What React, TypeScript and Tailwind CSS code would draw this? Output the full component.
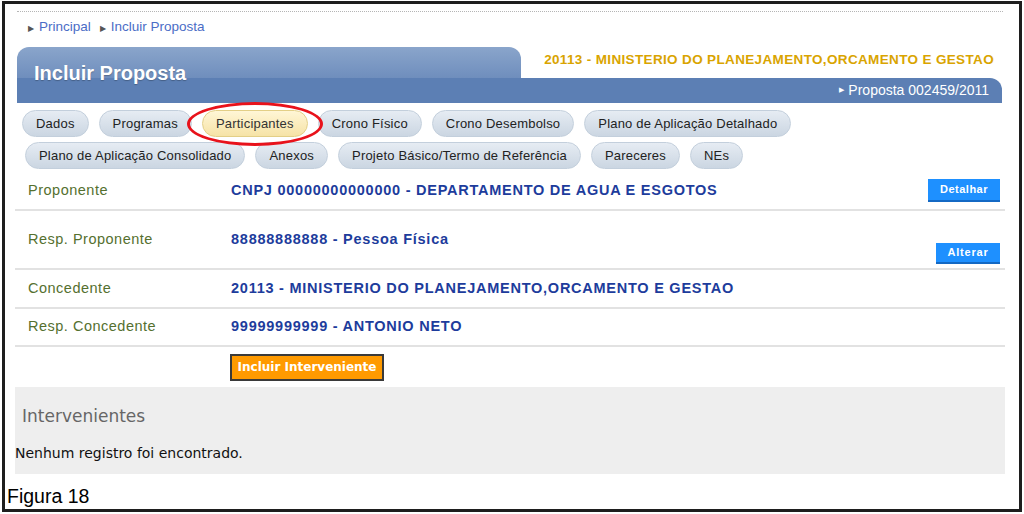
import React from "react";

const tabsRow1 = [
  "Dados",
  "Programas",
  "Participantes",
  "Crono Físico",
  "Crono Desembolso",
  "Plano de Aplicação Detalhado",
];

const tabsRow2 = [
  "Plano de Aplicação Consolidado",
  "Anexos",
  "Projeto Básico/Termo de Referência",
  "Pareceres",
  "NEs",
];

const Tab = ({ label }: { label: string }) => {
  const active = label === "Participantes";
  return (
    <div
      className={
        active
          ? "relative flex h-[27px] items-center rounded-full border border-[#e3cf86] bg-gradient-to-b from-[#fff6d6] to-[#f6e3a6] px-[13px] text-[13px] tracking-[0.2px] text-[#333]"
          : "flex h-[27px] items-center rounded-full border border-[#c3cfdc] bg-gradient-to-b from-[#e6ecf3] to-[#cbd6e2] px-[13px] text-[13px] tracking-[0.2px] text-[#222]"
      }
    >
      {label}
      {active && (
        <div className="pointer-events-none absolute left-[-16px] top-[-9px] h-[44px] w-[136px] rounded-[50%] border-[3px] border-[#e8121b]" />
      )}
    </div>
  );
};

const Row = ({
  label,
  value,
  height,
  children,
}: {
  label: string;
  value: string;
  height: string;
  children?: React.ReactNode;
}) => (
  <div className={`relative flex ${height} items-center border-b-2 border-[#e2e2e2]`}>
    <div className="w-[216px] pl-[13px] text-[14.5px] tracking-[0.5px] text-[#55702f]">{label}</div>
    <div className="text-[14.5px] font-bold tracking-[0.75px] text-[#1d3c9c]">{value}</div>
    {children}
  </div>
);

export default function App() {
  return (
    <div className="h-[514px] w-[1024px] bg-white px-[2px] pb-[2px] pt-[1px] font-['Liberation_Sans',Arial,sans-serif]">
      <div className="flex h-full flex-col border-[3px] border-[#1e1e1e] pl-[10px] pr-[14px]">
        {/* top dotted line + breadcrumb */}
        <div className="mx-[2px] mt-[7px] border-t border-dotted border-[#b5b5b5]" />
        <div className="ml-[13px] mt-[8px] flex h-[14px] items-center gap-[9px] text-[13.5px] text-[#4b6dc6]">
          <span>
            <span className="mr-[5px] text-[8px] text-[#555]">▶</span>Principal
          </span>
          <span>
            <span className="mr-[5px] text-[8px] text-[#555]">▶</span>Incluir Proposta
          </span>
        </div>

        {/* header */}
        <div className="ml-[2px] mr-[3px] mt-[13px]">
          <div className="flex h-[31px]">
            <div className="flex w-[504px] items-end rounded-t-[12px] bg-gradient-to-b from-[#8aa5cb] to-[#6f8ebd] pl-[17px]">
              <span className="translate-y-[10px] text-[20px] font-bold text-white [text-shadow:0_1px_1px_rgba(0,0,0,0.25)]">
                Incluir Proposta
              </span>
            </div>
            <div className="flex flex-1 items-center justify-end pb-[4px] pr-[8px] text-[13.5px] font-bold tracking-[0.35px] text-[#d9a400]">
              20113 - MINISTERIO DO PLANEJAMENTO,ORCAMENTO E GESTAO
            </div>
          </div>
          <div className="flex h-[25px] items-center justify-end rounded-tr-[12px] bg-[#5c7fb4] pr-[13px] text-[14px] text-white">
            <span className="mr-[4px] text-[7px]">▶</span>Proposta 002459/2011
          </div>
        </div>

        {/* tabs */}
        <div className="mt-[7px] flex flex-col gap-[5px] pl-[7px]">
          <div className="flex gap-[10px]">
            {tabsRow1.map((t) => (
              <Tab key={t} label={t} />
            ))}
          </div>
          <div className="flex gap-[10px] pl-[3px]">
            {tabsRow2.map((t) => (
              <Tab key={t} label={t} />
            ))}
          </div>
        </div>

        {/* data rows */}
        <div className="mt-[3px]">
          <Row label="Proponente" value="CNPJ 00000000000000 - DEPARTAMENTO DE AGUA E ESGOTOS" height="h-[39px]">
            <button className="ml-auto mr-[5px] h-[23px] w-[72px] border-b-2 border-[#1469c4] bg-[#1e90ff] text-[11px] font-bold tracking-[0.5px] text-white">
              Detalhar
            </button>
          </Row>
          <Row label="Resp. Proponente" value="88888888888 - Pessoa Física" height="h-[59px]">
            <button className="absolute bottom-[4px] right-[5px] h-[21px] w-[64px] border-b-2 border-[#1469c4] bg-[#1e90ff] text-[11px] font-bold tracking-[0.8px] text-white">
              Alterar
            </button>
          </Row>
          <Row label="Concedente" value="20113 - MINISTERIO DO PLANEJAMENTO,ORCAMENTO E GESTAO" height="h-[39px]" />
          <Row label="Resp. Concedente" value="99999999999 - ANTONIO NETO" height="h-[38px]" />
          <div className="flex h-[40px] items-center pl-[215px]">
            <button className="h-[27px] w-[154px] border-2 border-[#3a3a3a] bg-[#ff9a00] font-['DejaVu_Sans',Verdana,sans-serif] text-[12px] font-bold text-white">
              Incluir Interveniente
            </button>
          </div>
        </div>

        {/* intervenientes */}
        <div className="h-[87px] bg-[#eeeeee]">
          <div className="pl-[7px] pt-[17px] font-['DejaVu_Sans',Verdana,sans-serif] text-[17px] text-[#666]">
            Intervenientes
          </div>
          <div className="mt-[13px] font-['DejaVu_Sans',Verdana,sans-serif] text-[14px] text-[#111]">
            Nenhum registro foi encontrado.
          </div>
        </div>

        <div className="-ml-[8px] mt-[10px] text-[19.5px] leading-[24px] text-black">Figura 18</div>
      </div>
    </div>
  );
}
